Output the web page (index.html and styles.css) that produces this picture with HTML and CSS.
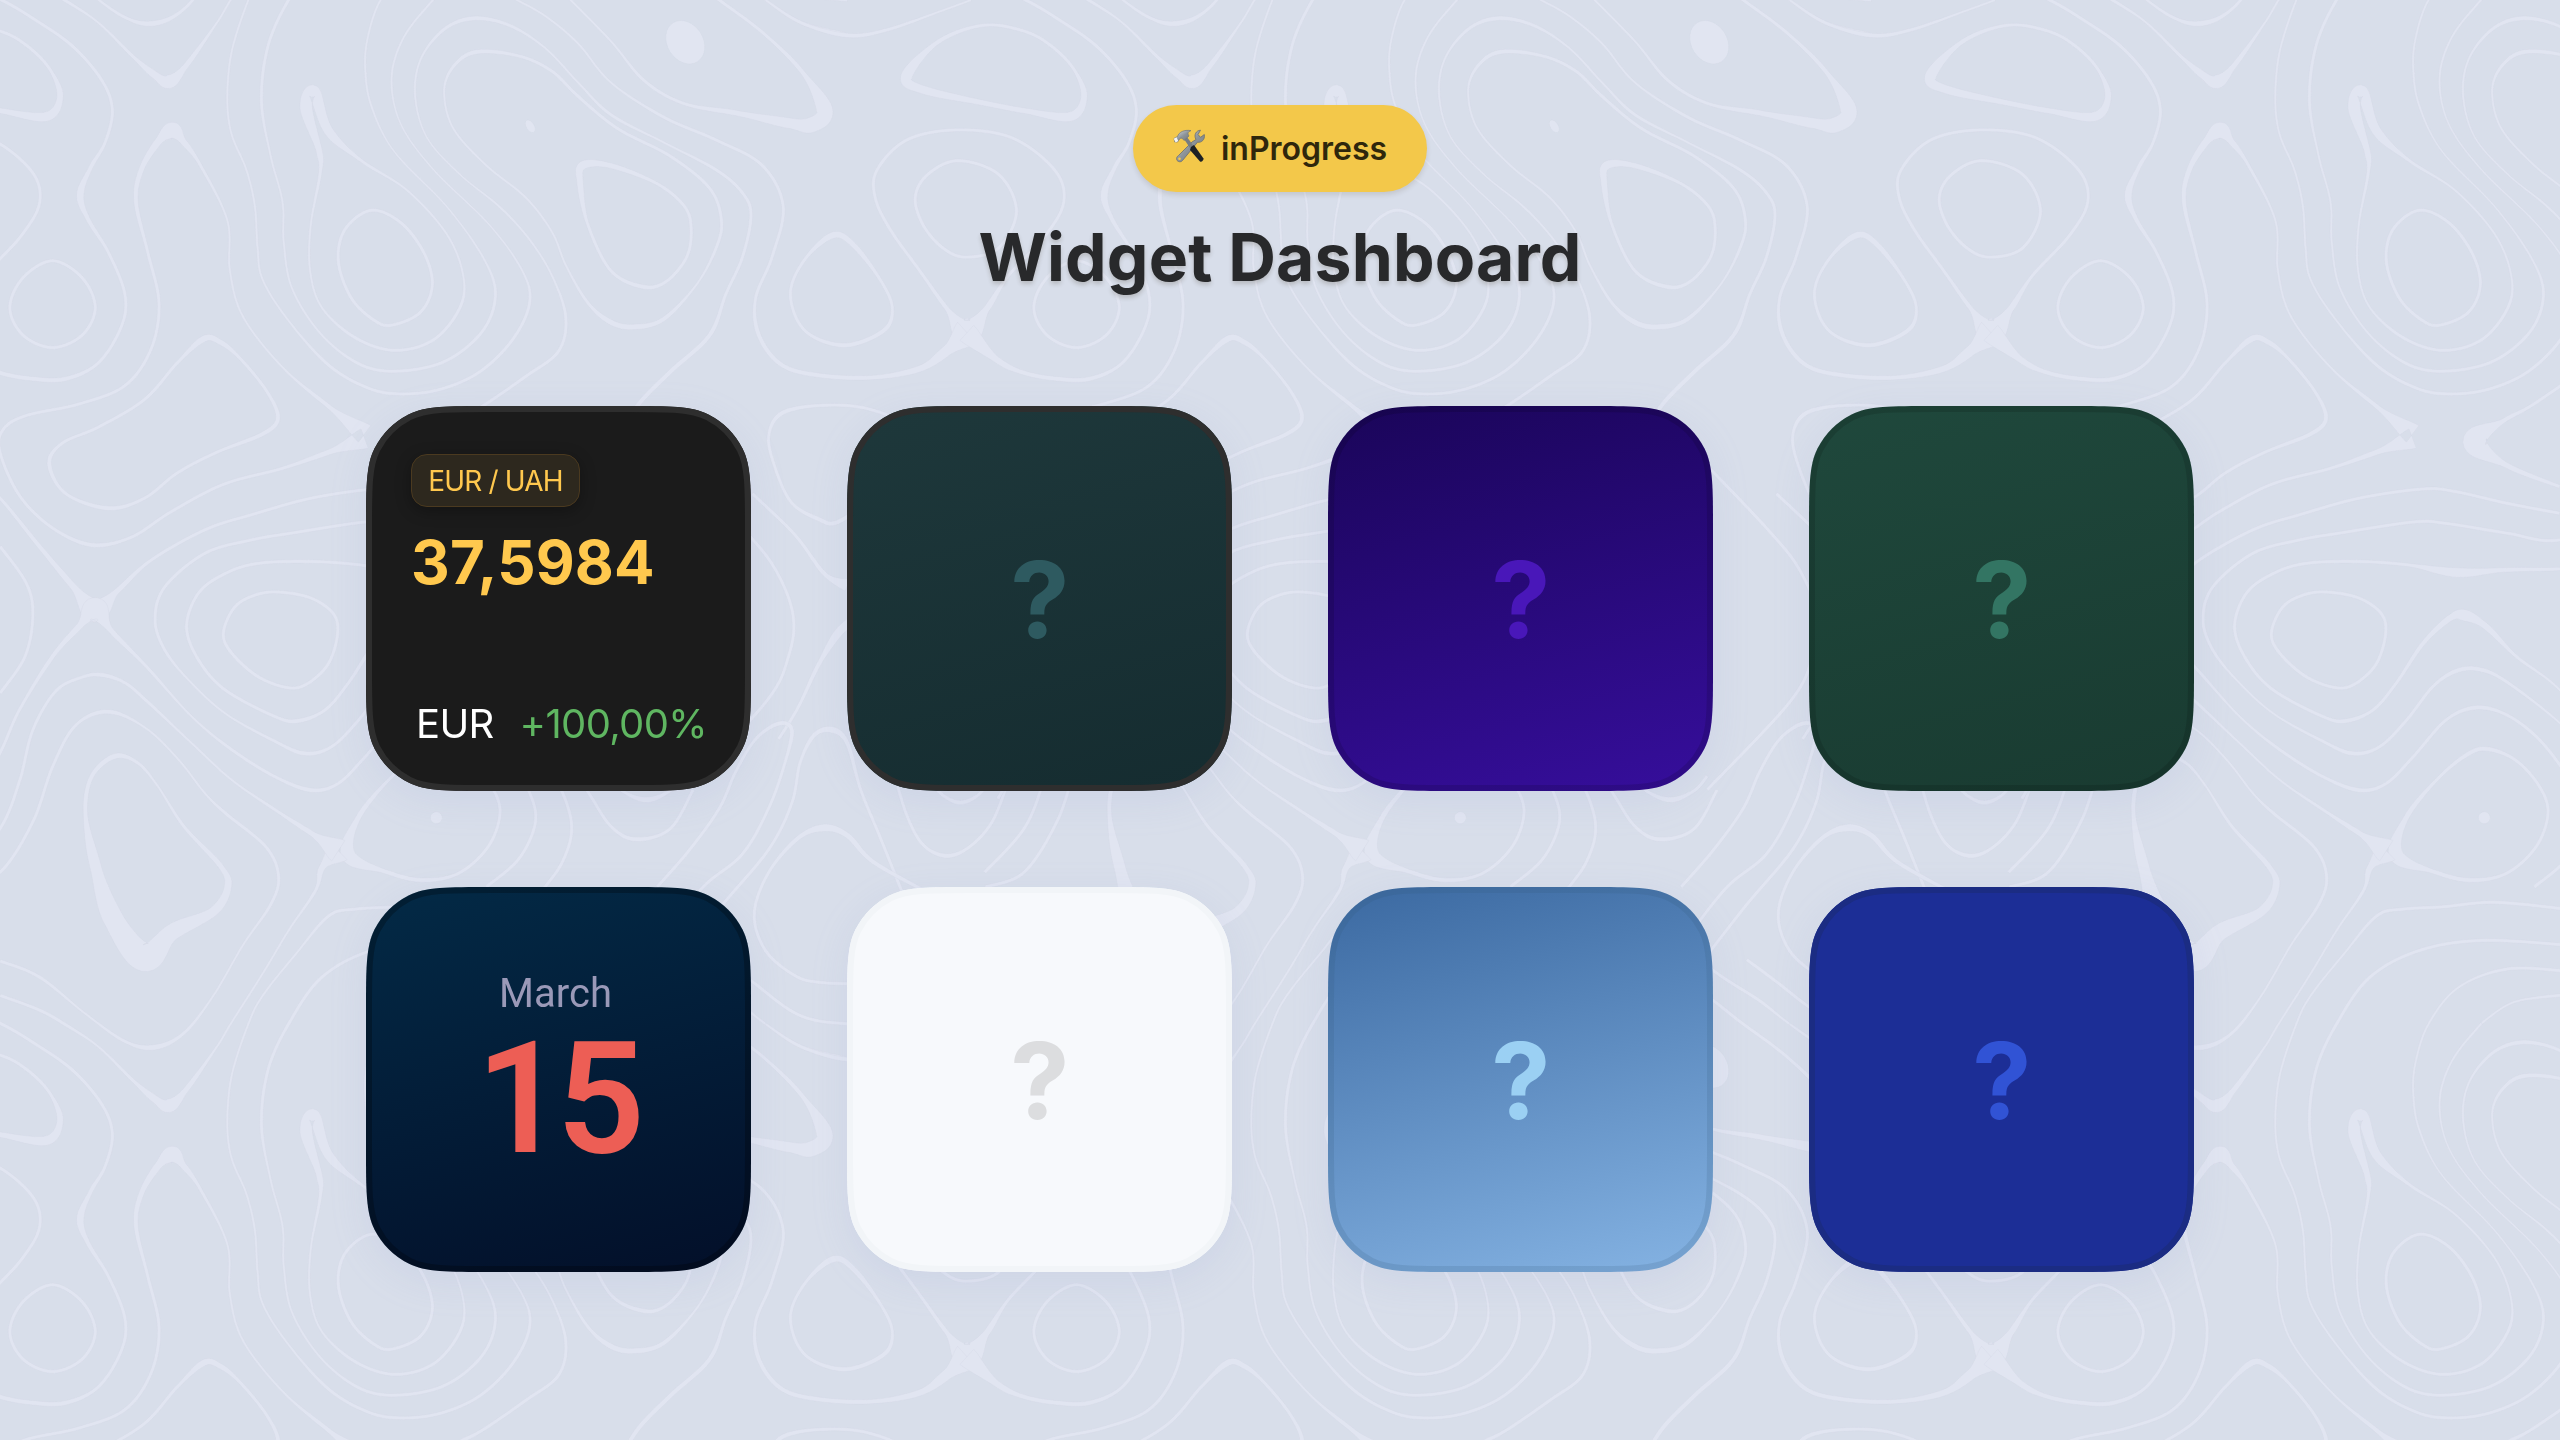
FILE: index.html
```html
<!DOCTYPE html>
<html lang="en">
<head>
<meta charset="utf-8">
<title>Widget Dashboard</title>
<link rel="stylesheet" href="styles.css">
</head>
<body>
<svg class="topography" aria-hidden="true">
  <defs>
    <pattern id="contours" width="1024" height="1024" patternUnits="userSpaceOnUse"></pattern>
    <path id="squircle" d="M124.8 0H260.2c43.68 0 65.52 0 82.21 8.5a78 78 0 0 1 34.09 34.09c8.5 16.69 8.5 38.53 8.5 82.21V260.2c0 43.68 0 65.52-8.5 82.21a78 78 0 0 1-34.09 34.09c-16.69 8.5-38.53 8.5-82.21 8.5H124.8c-43.68 0-65.52 0-82.21-8.5a78 78 0 0 1-34.09-34.09c-8.5-16.69-8.5-38.53-8.5-82.21V124.8c0-43.68 0-65.52 8.5-82.21a78 78 0 0 1 34.09-34.09c16.69-8.5 38.53-8.5 82.21-8.5Z"/>
  </defs>
  <rect width="100%" height="100%" fill="url(#contours)"/>
</svg>

<main class="page">
  <header class="header">
    <div class="status">
      <svg class="status__icon" viewBox="0 0 32 34" aria-hidden="true">
        <defs>
          <linearGradient id="steel" x1="0" y1="0" x2="1" y2="1">
            <stop offset="0" stop-color="#dfe3e6"/><stop offset=".5" stop-color="#8d9499"/><stop offset="1" stop-color="#6a7076"/>
          </linearGradient>
        </defs>
        <path d="M19 13 23 10.500C20.500 6 23 1.500 27.500 1.200L25 5.500 27.500 8.300 31.300 5.500C32.300 10.500 28.500 14 24.500 13.200L9.500 31.500C8 33.500 4.500 33 3.800 30.800 3.200 29 4 27.500 5.500 26.500Z" fill="url(#steel)" stroke="#6b6f70" stroke-width=".8"/>
        <circle cx="6.500" cy="29.800" r="1.300" fill="#f3c84a"/>
        <path d="M11 10 14 8 22 19 19 22Z" fill="#777d82"/>
        <path d="M18 18 21 16 30.500 29.500C31 31 28.500 33.500 27 32.500L17 21Z" fill="#1d2124"/>
        <path d="M1 9.500 4.500 7.500C6 3 11 .5 18 1.600 14.500 3.200 14.500 4.500 16 7L11 11.500C9.500 9 8 8.500 6.500 10L4.500 13 1.800 13Z" fill="url(#steel)" stroke="#70767a" stroke-width=".7"/>
        <path d="M.8 9.800 3.500 8.200 5.300 12 2.600 13.600Z" fill="#f4f6f7"/>
      </svg>
      <span class="status__text">inProgress</span>
    </div>
    <h1 class="title">Widget Dashboard</h1>
  </header>

  <section class="grid">
    <article class="card card--rate">
      <div class="card__face">
        <svg class="card__frame"><use href="#squircle"/></svg>
        <span class="pair">EUR / UAH</span>
        <span class="rate">37,5984</span>
        <div class="change"><span class="change__code">EUR</span><span class="change__value">+100,00%</span></div>
      </div>
    </article>
    <article class="card card--teal"><div class="card__face"><svg class="card__frame"><use href="#squircle"/></svg><span class="mark">?</span></div></article>
    <article class="card card--violet"><div class="card__face"><svg class="card__frame"><use href="#squircle"/></svg><span class="mark">?</span></div></article>
    <article class="card card--green"><div class="card__face"><svg class="card__frame"><use href="#squircle"/></svg><span class="mark">?</span></div></article>
    <article class="card card--date">
      <div class="card__face">
        <svg class="card__frame"><use href="#squircle"/></svg>
        <span class="month">March</span>
        <span class="day">15</span>
      </div>
    </article>
    <article class="card card--white"><div class="card__face"><svg class="card__frame"><use href="#squircle"/></svg><span class="mark">?</span></div></article>
    <article class="card card--sky"><div class="card__face"><svg class="card__frame"><use href="#squircle"/></svg><span class="mark">?</span></div></article>
    <article class="card card--blue"><div class="card__face"><svg class="card__frame"><use href="#squircle"/></svg><span class="mark">?</span></div></article>
  </section>
</main>
<script src="topography.js"></script>
</body>
</html>
```
FILE: styles.css
```css
* { box-sizing: border-box; }

body {
  margin: 0;
  width: 2560px;
  height: 1440px;
  overflow: hidden;
  background: #d8deea;
  font-family: Inter, "Liberation Sans", sans-serif;
}

.topography {
  position: absolute;
  inset: 0;
  width: 100%;
  height: 100%;
}

.topography .line {
  fill: #e1e5f1;
  fill-rule: evenodd;
  stroke: #cdd2e1;
  stroke-opacity: .45;
  stroke-width: .6;
}

.page {
  position: relative;
  display: flex;
  flex-direction: column;
  align-items: center;
  padding-top: 105px;
}

.header {
  display: flex;
  flex-direction: column;
  align-items: center;
  height: 301px;
}

.status {
  display: flex;
  align-items: center;
  gap: 16px;
  width: 294px;
  height: 87px;
  padding-left: 40px;
  border-radius: 44px;
  background: #f3c84a;
  box-shadow: 0 3px 5px rgba(60, 50, 20, .13);
}

.status__icon { width: 32px; height: 34px; margin-top: -5px; }

.status__text {
  font-size: 32px;
  font-weight: 600;
  line-height: 40px;
  color: #2f270c;
}

.title {
  margin: 25px 0 0;
  font-size: 66px;
  font-weight: 700;
  line-height: 80px;
  letter-spacing: .15px;
  white-space: nowrap;
  color: #28292b;
  text-shadow: 0 3px 4px rgba(60, 50, 30, .2);
}

.grid {
  display: grid;
  grid-template-columns: repeat(4, 385px);
  grid-auto-rows: 385px;
  gap: 96px;
}

.card { filter: drop-shadow(0 10px 18px rgba(130, 150, 205, .12)); }

.card__face {
  position: relative;
  display: flex;
  flex-direction: column;
  align-items: center;
  width: 385px;
  height: 385px;
  clip-path: path("M124.8 0H260.2c43.68 0 65.52 0 82.21 8.5a78 78 0 0 1 34.09 34.09c8.5 16.69 8.5 38.53 8.5 82.21V260.2c0 43.68 0 65.52-8.5 82.21a78 78 0 0 1-34.09 34.09c-16.69 8.5-38.53 8.5-82.21 8.5H124.8c-43.68 0-65.52 0-82.21-8.5a78 78 0 0 1-34.09-34.09c-8.5-16.69-8.5-38.53-8.5-82.21V124.8c0-43.68 0-65.52 8.5-82.21a78 78 0 0 1 34.09-34.09c16.69-8.5 38.53-8.5 82.21-8.5Z");
}

.card__frame {
  position: absolute;
  inset: 0;
  width: 385px;
  height: 385px;
  fill: none;
  stroke: rgba(0, 0, 0, .12);
  stroke-width: 12px;
}

.mark {
  margin: auto;
  padding: 2px 0 0 1px;
  font-size: 106px;
  font-weight: 700;
  line-height: 128px;
}

.card--teal .card__face { background: linear-gradient(165deg, #1e383b, #152c30); }
.card--teal .card__frame { stroke: #2e2e2e; }
.card--teal .mark { color: #2e5a60; }

.card--violet .card__face { background: linear-gradient(165deg, #1a0559, #360e9c); }
.card--violet .mark { color: #4917b9; }

.card--green .card__face { background: linear-gradient(165deg, #1f483c, #193b31); }
.card--green .mark { color: #337563; }

.card--date .card__frame { stroke: rgba(0, 0, 0, .25); }

.card--white .card__face { background: #f7f9fc; }
.card--white .card__frame { stroke: #f2f5f8; }
.card--white .mark { color: #dcdddf; }

.card--sky .card__face { background: linear-gradient(165deg, #3b69a1, #85b3e3); }
.card--sky .card__frame { stroke: rgba(50, 90, 120, .16); }
.card--sky .mark { color: #9bd0f3; }

.card--blue .card__face { background: #1c2e96; }
.card--blue .card__frame { stroke: #1b2c83; }
.card--blue .mark { color: #3153d5; }

.card--rate .card__face { align-items: flex-start; padding: 48px 45px; background: #1b1b1b; }
.card--rate .card__frame { stroke: #2e2e2e; }

.pair {
  width: 169px;
  height: 53px;
  border: 1px solid #4b3a20;
  border-radius: 16px;
  background: #2d281e;
  box-shadow: 0 4px 16px rgba(0, 0, 0, .3);
  font-size: 28px;
  line-height: 53px;
  letter-spacing: -.85px;
  text-align: center;
  white-space: nowrap;
  color: #ffc84e;
}

.rate {
  margin: 19px 0 0 0;
  font-size: 60px;
  font-weight: 700;
  line-height: 72px;
  letter-spacing: .15px;
  color: #ffc84e;
}

.change {
  display: flex;
  gap: 26px;
  margin: 102px 0 0 5px;
  font-size: 40px;
  font-weight: 400;
  line-height: 48px;
  letter-spacing: -.65px;
  white-space: nowrap;
}

.change__code { color: #fff; }
.change__value { color: #5fb661; }

.card--date .card__face {
  padding-top: 83px;
  font-family: Roboto, "Liberation Sans", sans-serif;
  background: linear-gradient(165deg, #032a46, #030f29);
}

.month {
  margin-right: 6px;
  font-size: 40px;
  line-height: 48px;
  color: #9a99b8;
}

.day {
  margin: 16px 0 0 -4px;
  font-size: 155px;
  font-weight: 600;
  line-height: 130px;
  letter-spacing: -8px;
  color: #ed5e55;
}
```
FILE: topography.js
```javascript
// Topographic background: each contour is a list of [x, y, width] on the survey grid,
// smoothed into a ribbon whose thickness follows the widths.
const TILE = 1024;
const SX = 1 / 1.522, SY = 1 / 2.178;

const closed = [
  [[1497,55,3],[1429,90,4],[1380,165,11],[1404,195,8],[1500,225,5],[1559,241,5],[1629,254,9],[1650,210,6],[1634,150,3],[1600,100,3],[1559,68,3]],
  [[565,458],[525,500],[515,570],[535,650],[570,698],[597,708],[640,680],[658,620],[645,550],[610,485]],
  [[725,113,4],[690,145,3],[676,200,2],[690,280,2],[740,360,2],[800,430,2],[840,505,2],[862,580,2],[895,660,3],[930,702,5],[965,712,5],[1010,695,4],[1060,620,2],[1090,540],[1098,480],[1080,410],[1020,340],[940,280],[880,210],[840,155],[790,122]],
  [[887,360,8],[930,361,5],[1000,400],[1042,450],[1052,500],[1045,560],[1015,612],[980,625,4],[930,590,3],[895,490,3],[883,400,6]],
  [[1458,350],[1412,380],[1393,430],[1405,490],[1435,540],[1470,560],[1520,540],[1547,460],[1520,380]],
  [[80,568],[35,605],[15,670],[35,730],[80,757],[125,730],[145,670],[125,605]],
  [[1268,512,6],[1225,565,3],[1203,640,3],[1225,720,3],[1285,752,4],[1345,720,4],[1358,670],[1340,610],[1300,535,5]],
  [[310,738,6],[270,790,3],[220,870,3],[150,930],[95,965],[75,1010,4],[100,1075,3],[165,1107,4],[220,1085],[270,1030],[330,985],[400,945,4],[423,910,4],[405,850,3],[365,780,3],[335,745,5]],
  [[340,1379],[358,1321],[393,1294],[429,1290],[474,1303],[507,1336],[514,1379],[500,1445],[469,1488],[439,1498],[393,1474],[353,1423]],
  [[175,1647,5],[140,1690,4],[130,1770,4],[145,1885,11],[172,2000,20],[220,2085,28],[262,2030,16],[325,1985,9],[347,1930,7],[335,1885,5],[280,1800,3],[240,1712,2],[210,1662,3]],
  [[530,1862,14],[546,1779,5],[596,1692,3],[642,1640,4],[672,1632,4],[713,1657,3],[748,1713],[761,1771],[743,1844],[698,1902],[642,1917,4],[586,1898,4]],
  [[478,200,12],[466,235,12],[486,330,6],[487,380,3],[473,490,2],[472,590,2],[490,670,2],[540,735],[600,763],[660,740],[700,670],[705,600,2],[680,510,2],[620,415,2],[550,350,3],[500,285,9]],
  [[1250,883,3],[1190,900,4],[1170,950,3],[1180,1020],[1205,1095],[1245,1130,4],[1275,1137,4],[1330,1080],[1380,1000],[1380,930],[1320,890]],
  [[1455,283],[1380,305],[1335,370],[1332,430],[1355,500],[1400,590],[1440,670,4],[1472,722,26],[1503,670,6],[1535,600,3],[1590,515],[1619,440],[1605,370],[1540,300]]
];

const open = [
  [[-60,-40],[0,-2],[50,40],[110,100],[155,175],[171,240],[160,310],[138,365,4],[122,425,7],[135,480,4],[165,550],[190,640],[185,710],[150,790],[100,825,4],[50,825,4],[0,812,4],[-40,785,6],[-87,725,20]],
  [[0,2168],[60,2200],[100,2232],[150,2280,2],[200,2350,3],[235,2393,7],[258,2408,13],[285,2370,5],[330,2280,2],[352,2228,2],[400,2120,2],[440,2025,2],[480,1940,3],[490,1890,6],[515,1853,24]],
  [[0,2093],[60,2128],[130,2208,2],[190,2268,3],[235,2281,5],[280,2250,3],[325,2168,2],[370,2058,2],[412,1970,3],[424,1910,3],[405,1845,3],[343,1771],[312,1728,2],[272,1655,2],[222,1586,2],[165,1550,4],[115,1580],[80,1670],[50,1790],[0,1900],[-59,1932]],
  [[660,-2,2],[615,80,2],[596,170,2],[610,270,1.5],[660,370,1.5],[745,490,1.5],[795,590,2],[806,660],[780,740],[730,810],[670,848],[610,858],[560,845],[500,795],[440,700,2],[400,610,2],[392,540,2],[388,450,2],[375,370,2],[352,290,2],[346,210,2],[353,110,2],[378,0,2],[400,-62,2],[450,-152,2],[500,-235],[540,-250],[600,-255],[680,-265],[790,-250]],
  [[790,-172],[660,-182],[565,-160],[490,-102],[440,-2],[408,100],[398,220],[412,340,2],[430,440,2],[432,530,2],[445,630,2],[490,730,2],[550,795],[610,808],[680,785],[735,720],[754,640],[735,560,2],[680,450,1.5],[600,330,1.5],[565,230,2],[556,150,2],[560,80,2],[580,-2,2],[625,-80,2],[700,-120],[790,-115]],
  [[660,-2,2],[710,-48,2],[790,-64]],
  [[555,945,20],[500,885,4],[430,800,2],[370,690,2],[350,590,2],[346,480,2],[305,360,3],[280,310,6],[262,285,17],[240,310,7],[215,370,5],[207,440,4],[225,550],[242,660],[230,760],[190,840],[120,880],[40,905],[5,935],[0,985],[30,1080],[80,1150],[140,1187,4],[200,1170],[260,1115],[340,1055],[430,1020],[500,985,5],[555,955,20]],
  [[779,1060,3],[700,1015,5],[650,962,24],[695,915,4],[735,884,3],[800,820],[850,765],[861,690],[840,600,2],[805,520,2],[760,450,2],[700,380,1.5],[650,300,1.5],[632,210,2],[640,130,2],[675,65],[720,40,4],[775,55],[830,105,2],[880,180,2],[930,250],[1010,310,2],[1090,370],[1130,420],[1143,470],[1130,560],[1105,640],[1080,730,4],[1020,810,4],[970,884,4],[940,960,4]],
  [[780,-5,2],[830,35,2],[880,95,2],[930,180,2],[1010,255],[1090,305],[1160,360],[1192,450],[1175,560],[1150,650],[1155,730,4],[1190,795,4],[1250,818,4],[1330,822,4],[1400,803,6],[1440,765,10],[1472,725,28]],
  [[865,-5,2],[930,90,2],[980,175,3],[1040,225,3],[1120,246,5],[1200,268,10],[1235,272,15],[1255,240,16],[1220,155,4],[1160,70],[1090,-5],[1050,-50],[1000,-100]],
  [[1000,2060],[1060,2125],[1120,2180],[1165,2230,2],[1220,2280],[1290,2307,4]],
  [[1165,0,2],[1220,50],[1290,77,4],[1350,65],[1440,20,2],[1478,0,2]],
  [[1100,2090],[1145,2138],[1200,2198],[1240,2222],[1290,2230]],
  [[-40,1040],[0,1085],[60,1190,4],[110,1275,6],[145,1328,24],[180,1285,5],[230,1220],[312,1154],[383,1121],[474,1085],[571,1065],[621,1071],[698,1096],[779,1118]],
  [[-40,1740],[0,1640],[30,1545],[80,1430,4],[120,1365,6],[145,1328,24],[170,1375,5],[223,1452,3],[292,1561,2],[353,1633],[419,1692],[474,1721,4],[515,1706],[556,1648],[606,1568],[652,1541,4],[698,1557],[743,1604],[779,1666],[805,1723],[815,1790],[790,1870],[740,1932]],
  [[900,1120],[779,1176],[698,1161],[606,1140],[556,1137],[444,1161],[383,1176],[312,1205],[251,1278],[236,1350],[251,1416],[287,1481,2],[343,1554,2],[419,1615],[464,1641,4],[505,1626],[546,1568],[586,1495],[622,1461,4],[657,1458,4],[698,1485],[779,1575,2],[830,1660],[860,1740],[870,1810],[855,1880],[825,1940]],
  [[850,1230],[779,1239],[698,1241,4],[622,1247,9],[546,1230],[470,1223],[393,1227],[343,1249],[302,1292],[284,1365],[302,1437],[343,1503],[419,1561],[454,1570,4],[495,1546],[530,1488],[571,1401,4],[611,1347,6],[634,1340,11],[667,1365,6],[713,1430],[779,1503,2],[850,1630,2],[895,1725],[930,1800],[968,1828,4],[1020,1805],[1055,1720]],
  [[925,1690],[950,1725],[985,1742,5],[1020,1722],[1040,1690]],
  [[-60,1900],[0,1805],[30,1700],[50,1590],[85,1505],[125,1475],[155,1470,4],[190,1487],[222,1525],[292,1619,2],[353,1699,2],[419,1764],[474,1815,5],[515,1853,24]],
  [[0,1190],[40,1270],[50,1340],[38,1430],[0,1510]],
  [[1145,1075],[1210,1165],[1255,1250,4],[1290,1275,12]],
  [[1030,1000],[1130,1150],[1180,1240],[1207,1340],[1200,1430],[1165,1530],[1040,1720]],
  [[1300,1350,10],[1275,1380,8],[1245,1450,4],[1215,1540],[1185,1610]],
  [[1000,1932],[1050,1850],[1095,1760],[1120,1680],[1150,1610],[1185,1576,4],[1205,1590,4],[1195,1660],[1170,1760],[1130,1860],[1070,1932],[1010,2040]],
  [[1040,2080],[1100,1970],[1170,1850],[1205,1750],[1218,1660],[1240,1600,4],[1268,1590,6],[1290,1620,4],[1310,1720],[1340,1825],[1375,1950]],
  [[1360,1680],[1380,1775],[1405,1840],[1440,1864,4],[1475,1845],[1510,1790],[1535,1700]],
  [[1415,1700],[1435,1732],[1462,1748,4],[1490,1730],[1510,1690]],
  [[1420,1950],[1330,1878,4],[1290,1820,5],[1255,1803,7],[1215,1825,4],[1170,1900],[1148,1990],[1165,2070],[1210,2125],[1250,2140],[1320,2143]]
];

const blobs = [[1043,92,18,23,-32],[807,275,4,7,-32],[664,1781,6,6,30]];

const lerp = (a, b, t) =>
  .5 * (2 * a[1] + (b[0] - a[0]) * t + (2 * a[0] - 5 * a[1] + 4 * b[0] - b[1]) * t * t
  + (3 * a[1] - a[0] - 3 * b[0] + b[1]) * t * t * t);

function sample(points, loop) {
  const p = points.map(([x, y, w = 3]) => [x * SX, y * SY, w + .4]);
  const n = p.length, out = [];
  const at = i => loop ? p[(i + n) % n] : p[Math.max(0, Math.min(n - 1, i))];
  for (let i = 0; i < (loop ? n : n - 1); i++) {
    const a = at(i - 1), b = at(i), c = at(i + 1), d = at(i + 2);
    for (let s = 0; s < 14; s++) {
      const t = s / 14;
      out.push([lerp([a[0], b[0]], [c[0], d[0]], t), lerp([a[1], b[1]], [c[1], d[1]], t), b[2] + (c[2] - b[2]) * t * t * (3 - 2 * t)]);
    }
  }
  if (!loop) out.push(p[n - 1]);
  return out;
}

function ribbon(points, loop) {
  const s = sample(points, loop), n = s.length, left = [], right = [];
  s.forEach(([x, y, w], i) => {
    const a = s[loop ? (i + n - 1) % n : Math.max(0, i - 1)];
    const b = s[loop ? (i + 1) % n : Math.min(n - 1, i + 1)];
    const dx = b[0] - a[0], dy = b[1] - a[1], l = Math.hypot(dx, dy) || 1, h = w / 2;
    left.push((x - dy / l * h).toFixed(1) + ' ' + (y + dx / l * h).toFixed(1));
    right.push((x + dy / l * h).toFixed(1) + ' ' + (y - dx / l * h).toFixed(1));
  });
  return loop
    ? 'M' + left.join('L') + 'ZM' + right.join('L') + 'Z'
    : 'M' + left.concat(right.reverse()).join('L') + 'Z';
}

const shapes = closed.map(c => `<path class="line" d="${ribbon(c, true)}"/>`)
  .concat(open.map(c => `<path class="line" d="${ribbon(c, false)}"/>`))
  .concat(blobs.map(([x, y, rx, ry, r]) =>
    `<ellipse class="line" rx="${rx}" ry="${ry}" transform="translate(${x * SX} ${y * SY}) rotate(${r})"/>`))
  .join('');

let tiles = '';
for (const x of [-TILE, 0, TILE]) {
  for (const y of [-TILE, 0, TILE]) {
    tiles += `<g transform="translate(${x} ${y})">${shapes}</g>`;
  }
}
document.getElementById('contours').innerHTML = tiles;
```
